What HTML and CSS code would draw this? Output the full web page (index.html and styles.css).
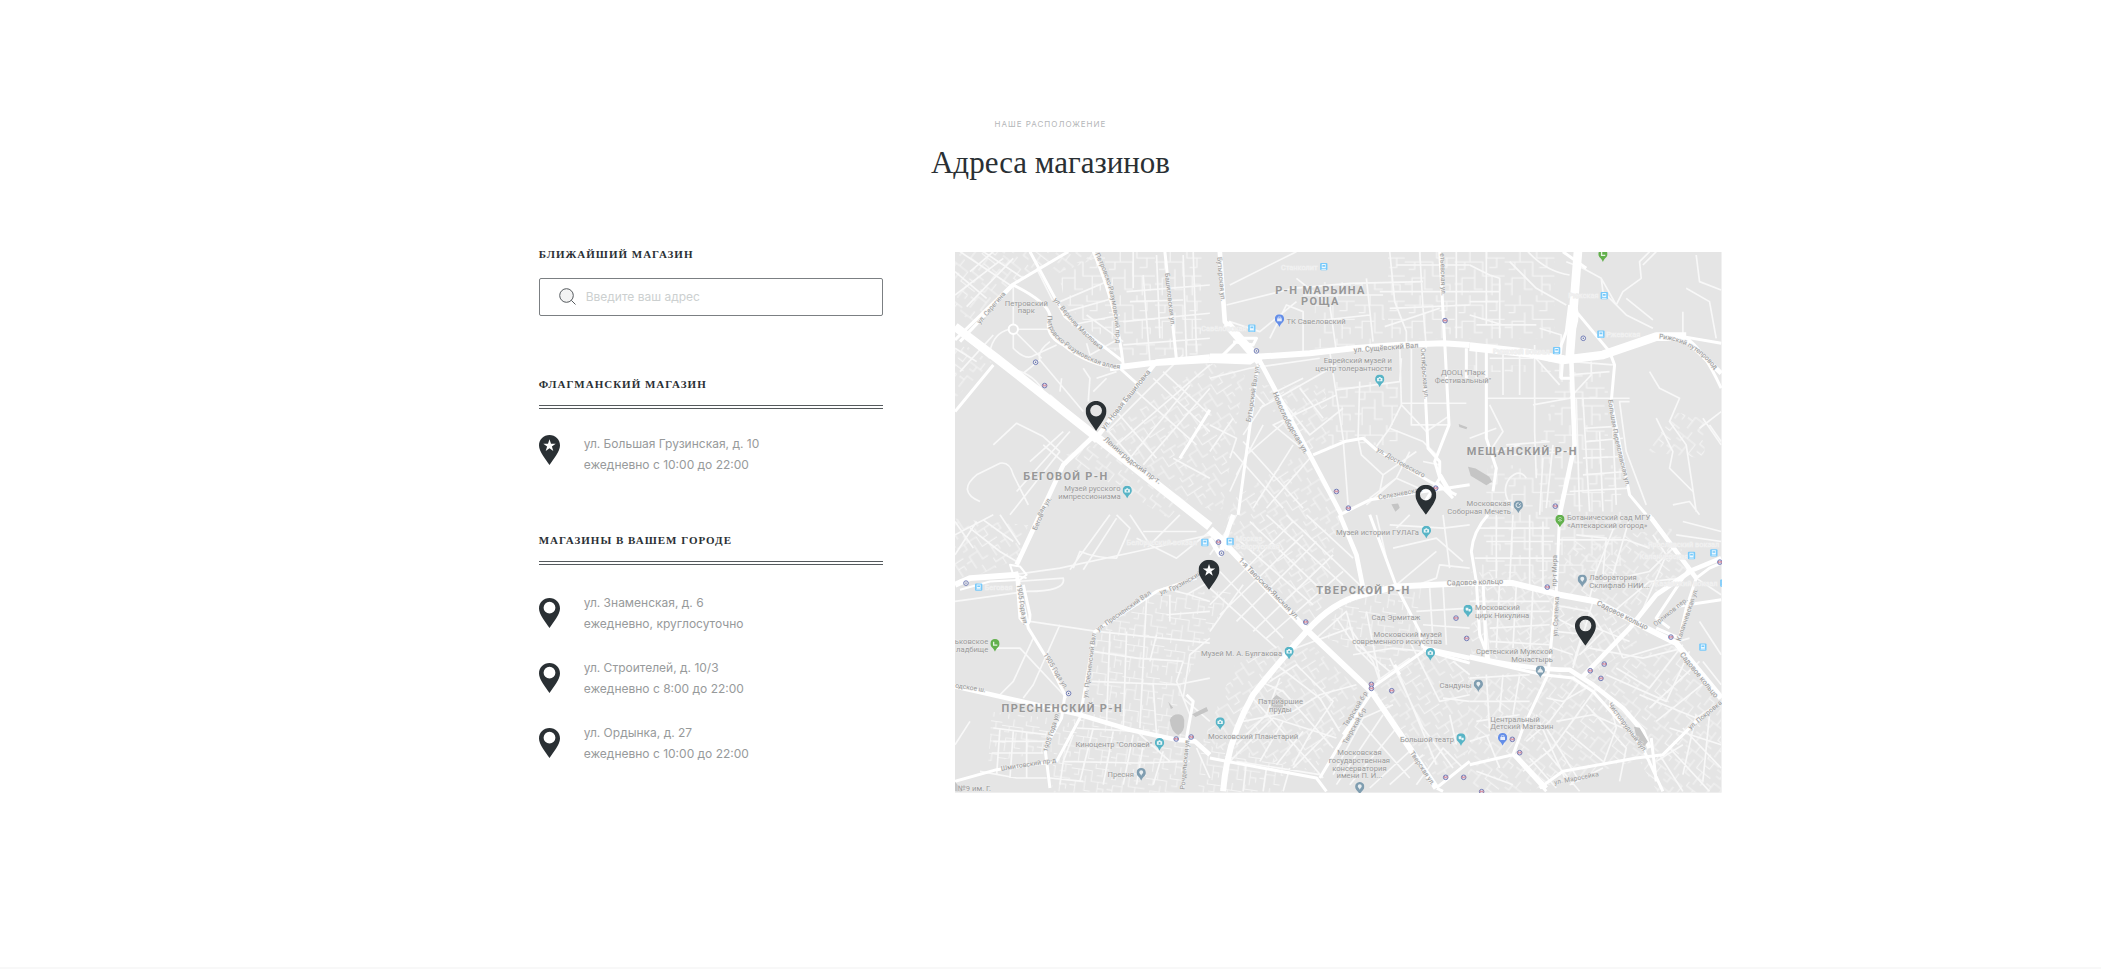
FILE: index.html
```html
<!DOCTYPE html>
<html lang="ru">
<head>
<meta charset="utf-8">
<meta name="viewport" content="width=device-width, initial-scale=1">
<title>Адреса магазинов</title>
<link rel="stylesheet" href="styles.css">
</head>
<body>
<svg class="sprite" aria-hidden="true">
  <symbol id="pin" viewBox="0 0 21 30"><path fill-rule="evenodd" d="M10.500 0C4.700 0 0 4.600 0 10.400C0 16.500 6.500 24 10.500 30C14.500 24 21 16.500 21 10.400C21 4.600 16.300 0 10.500 0ZM10.500 3.800A5.900 5.900 0 1 1 10.500 15.600A5.900 5.900 0 1 1 10.500 3.800Z"/></symbol>
  <symbol id="pin-star" viewBox="0 0 21 30"><path d="M10.500 0C4.700 0 0 4.600 0 10.400C0 16.500 6.500 24 10.500 30C14.500 24 21 16.500 21 10.400C21 4.600 16.300 0 10.500 0Z"/><path fill="#fff" d="M10.500 4.200L12 8.700H16.700L12.900 11.500L14.300 16L10.500 13.200L6.700 16L8.100 11.500L4.300 8.700H9Z"/></symbol>
</svg>
<main class="stores">
  <header class="stores-head">
    <p class="eyebrow">Наше расположение</p>
    <h1 class="title">Адреса магазинов</h1>
  </header>
  <div class="stores-body">
    <div class="panel">
      <form class="search">
        <label class="panel-title" for="address">Ближайший магазин</label>
        <div class="field">
          <svg class="field-icon" viewBox="0 0 18 18" aria-hidden="true"><circle cx="7.500" cy="7.500" r="6.800"/><path d="M12.300 12.300L16.500 16.500"/></svg>
          <input class="field-input" id="address" type="text" placeholder="Введите ваш адрес">
        </div>
      </form>
      <section class="group flagship">
        <h2 class="panel-title ruled">Флагманский магазин</h2>
        <ul class="list">
          <li class="shop"><svg class="shop-pin" aria-hidden="true"><use href="#pin-star"/></svg><p class="shop-text">ул. Большая Грузинская, д. 10<br>ежедневно с 10:00 до 22:00</p></li>
        </ul>
      </section>
      <section class="group city">
        <h2 class="panel-title ruled">Магазины в вашем городе</h2>
        <ul class="list">
          <li class="shop"><svg class="shop-pin" aria-hidden="true"><use href="#pin"/></svg><p class="shop-text">ул. Знаменская, д. 6<br>ежедневно, круглосуточно</p></li>
          <li class="shop"><svg class="shop-pin" aria-hidden="true"><use href="#pin"/></svg><p class="shop-text">ул. Строителей, д. 10/3<br>ежедневно с 8:00 до 22:00</p></li>
          <li class="shop"><svg class="shop-pin" aria-hidden="true"><use href="#pin"/></svg><p class="shop-text">ул. Ордынка, д. 27<br>ежедневно с 10:00 до 22:00</p></li>
        </ul>
      </section>
    </div>
    <svg class="map" viewBox="0 0 2301 1623" role="img" aria-label="Карта магазинов">
      <defs>
        <pattern id="blocks" width="150" height="130" patternUnits="userSpaceOnUse"><path class="tiny" d="M0 30H46V0M46 30H84V72H150M22 130V78H60V112H84M96 0V18H150M0 96H22M112 72V130M60 78V52M112 98H136V116M30 30V52H12M126 18V46H104"/></pattern>
        <pattern id="blocks-r" href="#blocks" patternTransform="rotate(38) scale(.8)"/>
        <pattern id="blocks-l" href="#blocks" patternTransform="rotate(-33) scale(.8)"/>
        <pattern id="blocks-t" href="#blocks" patternTransform="rotate(8) scale(.75)"/>
        <symbol id="drop" viewBox="0 0 28 38"><path d="M14 0C6 0 0 6 0 14C0 24 10 26 14 38C18 26 28 24 28 14C28 6 22 0 14 0Z"/></symbol>
        <g id="museum"><use href="#drop" x="-14" y="-14" width="28" height="38" fill="#57b4c6"/><path fill="#e9f6f8" d="M-8-4H-4L-2-7H2L4-4H8V6H-8Z"/><circle cy="1" r="3" fill="#57b4c6"/></g>
        <g id="drama"><use href="#drop" x="-14" y="-14" width="28" height="38" fill="#57b4c6"/><path fill="#e9f6f8" d="M-7-5H1V2Q-3 6-7 2ZM2-1H8V5Q5 8 1 5Z"/></g>
        <g id="place"><use href="#drop" x="-14" y="-14" width="28" height="38" fill="#7f9db0"/><path fill="#e8eef1" d="M0-7A6 6 0 0 1 6-1C6 3 2 4 0 9C-2 4-6 3-6-1A6 6 0 0 1 0-7Z"/></g>
        <g id="temple"><use href="#drop" x="-14" y="-14" width="28" height="38" fill="#7f9db0"/><path fill="#e8eef1" d="M-1-9H1V-5Q6-2 6 1H8V7H-8V1H-6Q-6-2-1-5Z"/></g>
        <g id="mosque"><use href="#drop" x="-14" y="-14" width="28" height="38" fill="#7f9db0"/><path fill="none" stroke="#e8eef1" stroke-width="3" d="M1-7A7 7 0 1 0 7 1M2-1L7-5"/></g>
        <g id="park"><use href="#drop" x="-14" y="-14" width="28" height="38" fill="#62b04c"/><path fill="#e6f3e2" d="M-6-6H-2V2H7V6H-6Z"/></g>
        <g id="garden"><use href="#drop" x="-14" y="-14" width="28" height="38" fill="#62b04c"/><path fill="none" stroke="#e6f3e2" stroke-width="2" d="M0 7V0M-6 4L0 0L6 4M-5-3A3 3 0 0 1 0-5A3 3 0 0 1 5-3"/></g>
        <g id="shop"><use href="#drop" x="-14" y="-14" width="28" height="38" fill="#648ee8"/><path fill="#e7edfb" d="M-7-2H7V7H-7Z"/><path fill="none" stroke="#e7edfb" stroke-width="2" d="M-4-2V-6H4V-2"/></g>
        <g id="train"><rect x="-11" y="-11" width="22" height="22" rx="3" fill="#77c9fa"/><path fill="#eef9ff" fill-rule="evenodd" d="M-6-8H6V5H-6ZM-4-5V0H4V-5ZM-7 7H7V9H-7Z"/></g>
        <g id="metro"><circle r="7" fill="#dcd9ea" stroke="#7480b8" stroke-width="3"/><path fill="none" stroke="#d46a76" stroke-width="2" d="M-4 3V-3L0 1L4-3V3"/></g>
        <g id="ring"><circle r="7" fill="#eee" stroke="#7480b8" stroke-width="3"/><circle r="2" fill="#5261a3"/></g>
      </defs>
      <rect width="2301" height="1623" fill="#e5e5e5"/>
      <!-- small blocks -->
      <g>
        <path fill="url(#blocks-r)" d="M0 0H330L180 100L60 210L0 180ZM0 260L110 330L0 440ZM270 80L420 20V0H330ZM300 620L440 570L560 690L700 740L640 800L480 700Z"/>
        <path fill="url(#blocks)" d="M310 60L430 0H740V310H520L460 290L330 150ZM1080 90H1290V290H1080ZM1300 0H1800V260H1300ZM1560 0H1630V280H1560Z"/>
        <path fill="url(#blocks-l)" d="M455 540L760 330L870 370L800 790L690 740ZM840 740L1040 600L1160 780L1090 1130L800 850ZM900 400L1110 400L1130 590L1040 600ZM0 800L220 820L190 920L0 1000Z"/>
        <path fill="url(#blocks)" d="M1120 390H1330V580H1120ZM1540 360H1960V640H1740L1820 340H1540ZM1600 640H2000V980H1580Z"/>
        <path fill="url(#blocks-t)" d="M420 1130L600 1020H830L690 1290L660 1440L390 1370ZM110 1380L290 1400V1500L100 1530ZM300 1440L390 1380L690 1450V1623H290ZM740 1460L990 1530L980 1623H730ZM1200 1000H1400L1380 1180L1300 1250L1100 1150Z"/>
        <path fill="url(#blocks-l)" d="M840 1240L1040 1150L1220 1320L1080 1560L740 1480ZM1260 1320L1390 1210L1540 1220V1500L1450 1590ZM1550 960H1800V1220H1550ZM1810 1060L1960 1070L2080 1150L1900 1280L1820 1240Z"/>
        <path fill="url(#blocks-r)" d="M1740 1260L1900 1270L2050 1420L2110 1510L1700 1623H1540V1270ZM1900 1260L2160 1180L2300 1340V1623H2110ZM1830 870L2150 830L2210 950L2010 1090L1830 1030ZM2080 600L2160 480L2250 500V620Z"/>
      </g>
      <!-- north-west -->
      <g transform="translate(-15 -21)">
        <path class="street" d="M30 20L180 120M100 20L220 100M15 80L110 160M15 150L160 40M50 185L190 40M130 20L60 80M190 120V240M205 253H300M178 253Q130 265 120 320M200 265L275 340M190 265V310Q230 350 255 330L320 300M300 290Q260 320 270 345L400 500M270 345L220 385M15 310L80 350M30 380L130 270M60 290L120 340M330 170L470 110M350 200L490 160M365 240L510 210M410 295L420 330L510 280M310 170L260 70M410 210L520 290M520 230L780 205M530 140L780 120M550 20V130M580 90L600 350M620 30L630 280M700 30L710 340M730 20L740 320M520 300L780 280M540 170L700 165M400 370L420 400L415 470M440 400L500 380M430 440L470 400M335 400L330 440M300 450L380 520M170 370Q250 380 280 440L360 510M90 770Q20 740 80 690L150 655Q180 650 190 690L235 780M130 600L200 535L280 575L330 620M200 740L360 560M240 650L340 560M280 600L350 660M180 810L330 620M470 560L700 330M500 600L780 360M540 640L720 420M580 660L780 430M460 540L590 690M500 500L620 640M560 440L740 600M610 400L780 560M640 380L780 510M670 640L780 700"/>
        <path class="road" d="M190 120L30 290M355 20L185 120L15 285M240 20L345 215L520 350M190 120Q290 170 300 210Q280 270 340 300Q410 360 510 370L560 415M430 20Q500 180 520 360M645 20L680 345M15 500L130 360M780 495L690 640"/>
        <path class="main" d="M430 590L620 350L780 335M430 575L340 660L270 810"/>
        <path class="avenue" d="M480 370L600 355L780 345"/>
        <path class="highway" d="M15 245L140 340L438 575L780 845"/>
        <circle class="round" cx="190" cy="253" r="14"/>
      </g>
      <!-- north -->
      <g transform="translate(765 -21)">
        <path class="street" d="M60 120L260 20M50 180L250 130L420 115L640 110M260 100L360 180L380 320M60 230L150 260L260 170M180 280L230 180L280 200V320M300 230L480 210M470 100L490 290M540 20L555 170L590 260V310M630 20L640 190L650 310M560 60H780M510 140H780M540 190L780 180M525 245L690 190M740 20V280M700 60H780M280 150H520M360 320L400 580L415 780M380 435L570 410L575 340M570 300L575 480L540 550L500 605M575 475H770M605 310V540H715M450 410L445 580L455 630L520 690L510 740M0 400L120 370L330 340M150 490L380 360M200 440L280 400M165 480L120 430M100 570L160 480M0 540L80 580L60 640M0 620L70 520M100 590L280 790M70 620L220 790M60 740L110 630L260 500M300 630L190 540L380 450M250 600L130 790M300 640L170 790M160 540L80 690M220 470L300 570L400 490M270 430L340 520M540 550L640 590L680 630M575 480L650 560L715 515M600 620L560 700L470 780M520 690L620 620M480 760L560 700L650 740M640 650L690 660"/>
        <path class="road" d="M310 630L405 590L460 580L500 615L660 710L740 750M85 810L145 360M690 20L705 290L718 540L675 650L690 700M640 310L655 610L690 650L690 700L640 780M390 810L480 765L780 720M70 290L130 300L140 280H90L40 330M770 310V400M680 710L730 760"/>
        <path class="main" d="M30 20L45 230L140 340M140 330L300 630L395 810M690 690L725 750"/>
        <path class="avenue" d="M0 335H150L300 325L430 310L560 300L700 295L780 300M0 345L120 350L150 330"/>
        <path class="highway" d="M50 235L150 350"/>
      </g>
      <!-- north-east -->
      <g transform="translate(1545 -21)">
        <path class="street" d="M0 60L60 90L90 100V280M0 140H90M0 170H85M0 210L100 240M20 240H200M50 20V240M120 50L200 130L290 180M175 20Q230 80 300 90M290 50L340 70L395 100L440 180M395 100L400 140L470 210L550 250M470 160L550 225M540 20L510 50L515 100L460 140L440 180M560 20L520 60M680 30L690 110L755 135M650 130L720 170L740 280M640 200V290M210 250L275 270L270 400M310 350L430 360M365 350V390L300 460L190 480M195 300V560L200 700M50 460H480M60 480L100 560L60 620M190 330L270 420M300 390L420 380M320 460L330 800M340 460L360 800M345 550L430 545M350 590L460 580M340 640L450 635M340 690L470 680M390 560L400 800M430 550L440 780M300 740L480 730M480 470L450 470L470 620L530 780M540 380L570 430L630 460L600 530L650 600L680 800M560 520L610 620L600 670L670 740M690 550L755 500M700 520L755 600M720 540L755 590M610 780L660 770L690 810M110 600L240 590M130 630L300 620M220 640L210 810M250 600L230 790M170 700Q150 670 120 700Q90 740 130 790M0 580L80 550M80 620L150 600M20 300V400M60 340H190M100 320V450M150 320V450M220 320L240 350"/>
        <path class="road" d="M320 200L420 320L435 360L425 470L480 750L530 810M50 320V580L80 670L70 740M280 330L275 400H310M640 275L755 295M280 20L350 70M300 180L290 260L275 300L270 340M320 190Q330 230 300 280M650 280Q700 310 755 430"/>
        <path class="main" d="M305 340L315 600L270 810M755 385L650 285"/>
        <path class="highway" d="M325 20L300 340M0 305L180 325L280 345L400 330L560 275L650 275"/>
      </g>
      <!-- south-west -->
      <g transform="translate(-15 789)">
        <path class="street" d="M15 60L130 0M15 120L80 20M60 40L150 110L200 140M100 15L190 80M150 0L210 90M15 20L70 100M360 165L480 0M400 165L500 10M370 160L390 110Q440 130 500 130L540 40L500 0M540 0L600 90L690 0M560 70L680 130L780 50M580 50H740M200 200L340 190Q350 230 230 230L15 260M120 190L330 160L560 110L780 60M240 320L440 350L780 385M330 330L250 510L220 550M250 370L190 500L150 540M140 400L210 400L350 550M430 410L560 430L700 440M425 500L680 510L780 490M590 250L570 640M660 240V320M710 240L780 200M650 300L780 290M480 350L470 620M530 350L520 640M620 360L600 440M700 440L680 500L720 600M780 370L720 420L700 550L780 620M610 510L620 660M130 640L290 660M130 680H290M125 715H280M150 640L140 780M190 650L180 790M230 650V790M90 770L200 790H290M15 690L60 620M380 640L560 650L660 740M370 660L340 740L330 810M430 640L390 800M490 650L460 810M550 660L520 810M340 740L560 745L720 740M580 690L560 810M640 710L610 810M300 790L400 800M720 670L700 820M740 700L780 790M780 260L720 240L640 220"/>
        <path class="road" d="M200 170L235 340L290 430L345 540L335 610L285 700L300 820M390 610L435 350L620 230L740 190M15 800L140 765L320 740L390 610M200 180L210 310Q240 350 240 300L220 210M710 670L730 560L710 540"/>
        <path class="main" d="M15 515L390 600L540 645L680 675L735 680L780 720M270 0L200 150"/>
        <path class="avenue" d="M15 210L60 190L200 180"/>
        <path class="thin" d="M30 225L120 200L210 195L230 180L210 155L180 150L190 180L230 190"/>
      </g>
      <!-- south -->
      <g transform="translate(765 789)">
        <path class="street" d="M0 270L250 20M30 300L280 60M80 320L320 80M130 350L370 120M170 370L400 170M30 170L220 370M0 220L200 400M80 70L310 270M120 20L350 240M170 0L400 210M230 0L460 220M290 0L430 130M0 350L100 210M0 120L70 20L80 0M500 0L530 130M540 30L700 40L780 30M550 100L680 70L760 140M570 230L680 190L690 150L780 160M600 0L560 40M700 0L720 160M560 210L680 110M620 290L780 280M640 330L780 340M700 210L710 390M660 220L670 380M230 410L420 340L490 440L510 500M380 310L420 370L540 470M320 370L410 290L440 400L510 470M430 420L550 400L640 410M540 430L640 640L730 760M600 380L690 560L780 540M560 460L680 750M500 500L600 430M470 290L510 490M120 540L280 720L340 790M150 500L220 530L370 700M200 450L330 550L390 650M180 500L260 450L370 560L300 660L250 750M100 620L250 590L330 540L440 510M80 690L170 600L210 490M50 750L190 610L380 670M80 740L330 780M150 740L220 620M200 750L280 650M250 760L370 640M110 740L100 830M170 760L160 830M240 760L220 830M370 780L460 610L550 570M380 810L520 600M420 810L560 640M480 820L610 700M540 810L640 720M620 810L700 700L760 760M450 620L600 790M510 570L660 790M700 550L780 560M720 600L740 690M730 440L780 480"/>
        <path class="road" d="M480 0L560 215L630 350L640 400M485 520L640 410M555 450L570 480M0 730L50 740L320 790L350 830M330 790L485 530M680 820L780 740M680 820L700 830M400 660L485 535M640 405L780 445"/>
        <path class="main" d="M390 0L440 120L460 220M640 400L780 430M0 70L30 120L70 0"/>
        <path class="avenue" d="M40 830Q50 680 130 540Q200 450 290 350Q370 260 460 240L560 215L780 205M30 70L290 345L485 530L600 700L680 820"/>
        <path class="highway" d="M0 45L60 100"/>
      </g>
      <!-- south-east -->
      <g transform="translate(1545 789)">
        <path class="street" d="M30 40H240M50 80H250M15 130H250M80 0V190M130 0L120 200M180 0V210M220 20V220M40 220L60 440M0 260H240M90 200L80 400M140 210L130 400M190 220L180 430M60 290H240M60 340L240 330M60 380L240 390M250 270L360 290L400 350L330 420M260 310L340 350L310 450M255 350L360 360M250 400L310 420M370 260L310 460M320 60L410 70L400 180M270 75H470L540 100M440 20L380 170L360 250M480 10L430 180M550 60L590 120L500 330M400 200L540 170L620 90M420 300L540 200L640 190M380 340L480 380M420 340L460 430M360 400L520 430L640 400M460 430L660 370M440 460L540 520L640 390M410 480L590 560L660 410M510 540L680 610L755 560M540 580L690 440M560 620L710 500M600 640L755 690M640 640L755 760M680 600L640 780M720 600L700 800M570 720L640 830M600 700L720 830M560 740L640 690M330 500L240 620L170 680M380 520L250 700L160 770M420 560L440 640L400 750M350 570L470 700L450 800M260 620L370 600L460 640M230 640L330 800M200 600L290 800M290 650L400 740M350 520L280 560L230 550M0 490L180 480M0 560H180M20 620L150 600M50 660L90 760M0 680L60 660M50 480L60 650M100 480L90 590M150 480L130 600M20 770L130 810M180 730L260 820M220 700L330 830M300 810L400 760M680 190L755 240M620 60L755 80M640 20L755 50M690 320L755 420M700 440L755 510"/>
        <path class="road" d="M270 0L260 230L235 480L160 640L130 720L0 750M20 200L30 360L60 440M40 200L50 430M55 0Q10 50 5 110L20 200M600 340L560 310L660 160M680 190L650 280L630 370L560 340M680 190L540 0M755 565L680 620L580 720L500 730L280 770L210 820M420 570L520 700L580 830M130 720L230 830M0 430L220 480L310 490L370 530L450 620L520 690M545 670L560 800M680 190L720 160L755 145M620 275L755 255"/>
        <path class="main" d="M0 425Q180 465 300 465L370 510L460 580L520 650L540 700M340 485L480 340L560 240L670 165L755 130M135 720L230 820M545 10L680 190"/>
        <path class="avenue" d="M0 205L130 205L270 240L380 260L530 340L620 385L755 550"/>
      </g>
      <!-- ponds -->
      <g fill="#c5c5c5">
        <path d="M1540 645L1563 650L1604 675L1612 690L1595 700L1548 672Z"/>
        <path d="M645 1405Q650 1388 672 1388Q690 1390 688 1415Q690 1440 670 1450Q648 1440 645 1405ZM712 1388L755 1366L760 1378L722 1396ZM640 1350L655 1368L648 1372Z"/>
        <path d="M945 1349L965 1330L988 1345L983 1370L952 1372ZM2038 1425L2055 1428L2080 1470L2065 1488L2052 1478ZM1310 757L1330 755L1335 768L1322 780Z"/>
        <path d="M1512 516L1538 526L1535 532L1514 525ZM0 1590L8 1600L30 1612L20 1620L0 1618Z"/>
      </g>
      <!-- station names -->
      <g class="station">
        <g transform="translate(765 -21)"><text x="214" y="74">Станколит</text></g>
        <g transform="translate(1545 -21)"><text x="296" y="160">Рижская</text><text x="410" y="277">Ржевская</text><text x="70" y="326">Рижский вокзал</text></g>
        <g transform="translate(-15 789)"><text x="104" y="226">Беговая</text><text x="530" y="91">Белорусский вокзал</text></g>
        <g transform="translate(765 789)"><text x="78" y="79">Москва</text><text x="78" y="102">Белорусская</text></g>
        <g transform="translate(1545 789)"><text x="535" y="97">Ярославский вокзал</text><text x="510" y="132">Каланчёвская</text><text x="555" y="214">Казанский вокзал</text></g>
        <text class="end" x="875" y="236">Савёловская</text>
      </g>
      <!-- street names -->
      <g class="name">
        <g transform="translate(-15 -21)">
          <path id="s1" d="M435 28Q490 130 497 262L500 340"/><path id="s2" d="M310 165L375 245L440 305L520 360"/><path id="s3" d="M293 212Q290 260 330 290Q400 350 490 370L600 380"/><path id="s4" d="M90 238L200 110"/><path id="s5" d="M645 85L672 320"/><path id="s6" d="M464 555L640 335"/><path id="s7" d="M460 585L540 655L720 785"/><path id="s7b" d="M270 815L345 705"/>
          <text><textPath href="#s1">Петровско-Разумовский пр-д</textPath></text><text><textPath href="#s2">ул. Верхняя Масловка</textPath></text><text><textPath href="#s3">Петровско-Разумовская аллея</textPath></text><text><textPath href="#s4">ул. Серегина</textPath></text><text><textPath href="#s5">Башиловская ул.</textPath></text><text class="big"><textPath href="#s6">ул. Новая Башиловка</textPath></text><text class="big"><textPath href="#s7">Ленинградский пр-т.</textPath></text><text><textPath href="#s7b">вая ул.</textPath></text>
        </g>
        <g transform="translate(765 -21)">
          <path id="s8" d="M22 37L42 277"/><path id="s9" d="M692 25L698 260"/><path id="s10" d="M433 323L740 299"/><path id="s11" d="M633 310L650 550"/><path id="s12" d="M122 532L160 290"/><path id="s13" d="M188 445L220 520L360 760"/><path id="s14" d="M500 618L570 660L750 755"/><path id="s15" d="M507 764L740 722"/>
          <text><textPath href="#s8">Бутырская ул.</textPath></text><text><textPath href="#s9">етьевская ул.</textPath></text><text class="big"><textPath href="#s10">ул. Сущёвский Вал</textPath></text><text><textPath href="#s11">Октябрьская ул.</textPath></text><text><textPath href="#s12">Бутырский Вал ул.</textPath></text><text class="big"><textPath href="#s13">Новослободская ул.</textPath></text><text><textPath href="#s14">ул. Достоевского</textPath></text><text><textPath href="#s15">Селезневская</textPath></text>
        </g>
        <g transform="translate(1545 -21)">
          <path id="s16" d="M568 281Q670 288 735 375L790 450"/><path id="s17" d="M415 465L432 570L485 790"/>
          <text><textPath href="#s16">Рижский путепровод</textPath></text><text><textPath href="#s17">Большая Переяславская ул.</textPath></text>
        </g>
        <g transform="translate(-15 789)">
          <path id="s18" d="M200 210L228 378"/><path id="s19" d="M280 420L385 590"/><path id="s20" d="M293 713L350 523"/><path id="s21" d="M413 550L448 284"/><path id="s22" d="M445 350L680 183"/><path id="s23" d="M632 240Q700 220 790 155"/><path id="s24" d="M154 768L410 728"/><path id="s25" d="M15 518L160 541"/><path id="s26" d="M704 825L726 600"/><path id="s27" d="M260 48L305-57"/>
          <text><textPath href="#s18">1905 Года ул.</textPath></text><text><textPath href="#s19">1905 Года ул.</textPath></text><text><textPath href="#s20">1905 Года ул.</textPath></text><text><textPath href="#s21">ул. Пресненский Вал</textPath></text><text><textPath href="#s22">ул. Пресненский Вал</textPath></text><text><textPath href="#s23">ул. Грузинский</textPath></text><text><textPath href="#s24">Шмитовский пр-д</textPath></text><text><textPath href="#s25">одское ш.</textPath></text><text><textPath href="#s26">Рочдельская ул.</textPath></text><text><textPath href="#s27">Бегов</textPath></text>
        </g>
        <g transform="translate(765 789)">
          <path id="s28" d="M85 138L310 365"/><path id="s29" d="M410 638L500 494"/><path id="s30" d="M410 690L510 513"/><path id="s31" d="M600 715L700 865"/><path id="s32" d="M712 212L960 204"/>
          <text class="big"><textPath href="#s28">1-я Тверская-Ямская ул.</textPath></text><text><textPath href="#s29">Тверской б-р</textPath></text><text><textPath href="#s30">Тверской б-р</textPath></text><text><textPath href="#s31">Тверская ул.</textPath></text><text class="big"><textPath href="#s32">Садовое кольцо</textPath></text>
        </g>
        <g transform="translate(1545 789)">
          <path id="s33" d="M260 215L263 60"/><path id="s34" d="M263 365L270 200"/><path id="s35" d="M380 270L630 395"/><path id="s36" d="M630 420L790 617"/><path id="s37" d="M558 335L700 222"/><path id="s38" d="M633 380L704 170"/><path id="s39" d="M663 645L800 532"/><path id="s40" d="M415 570L560 763"/><path id="s41" d="M255 810L450 772"/>
          <text><textPath href="#s33">пр-т Мира</textPath></text><text><textPath href="#s34">ул. Сретенка</textPath></text><text class="big"><textPath href="#s35">Садовое кольцо</textPath></text><text class="big"><textPath href="#s36">Садовое кольцо</textPath></text><text><textPath href="#s37">Орликов пер.</textPath></text><text><textPath href="#s38">Каланчевская ул.</textPath></text><text><textPath href="#s39">ул. Покровка</textPath></text><text><textPath href="#s40">Чистопрудный бул.</textPath></text><text><textPath href="#s41">ул. Маросейка</textPath></text>
        </g>
      </g>
      <!-- places -->
      <g class="poi">
        <g transform="translate(-15 -21)"><text class="mid" x="229" y="182">Петровский<tspan x="229" dy="23">парк</tspan></text><text class="end" x="512" y="739">Музей русского<tspan x="512" dy="23">импрессионизма</tspan></text><use href="#museum" x="532" y="737"/><use href="#ring" x="257" y="352"/><use href="#metro" x="284" y="422"/></g>
        <g transform="translate(765 -21)"><text x="230" y="236">ТК Савеловский</text><text class="end" x="547" y="354">Еврейский музей и<tspan x="547" dy="23">центр толерантности</tspan></text><text class="mid" x="760" y="391">ДООЦ "Парк<tspan x="760" dy="23">Фестивальный"</tspan></text><use href="#shop" x="209" y="222"/><use href="#museum" x="510" y="403"/><use href="#train" x="342" y="65"/><use href="#train" x="126" y="250"/><use href="#ring" x="140" y="318"/><use href="#metro" x="706" y="227"/><use href="#metro" x="678" y="730"/><use href="#metro" x="380" y="740"/><use href="#metro" x="416" y="790"/></g>
        <g transform="translate(1545 -21)"><use href="#park" x="400" y="27"/><use href="#train" x="404" y="152"/><use href="#train" x="394" y="268"/><use href="#train" x="261" y="317"/><use href="#ring" x="341" y="280"/><use href="#metro" x="257" y="784"/><text class="end" x="124" y="784">Московская<tspan x="124" dy="23">Соборная Мечеть</tspan></text><use href="#mosque" x="146" y="781"/></g>
        <g transform="translate(-15 789)"><use href="#train" x="86" y="217"/><use href="#train" x="765" y="83"/><use href="#ring" x="48" y="205"/><use href="#ring" x="356" y="536"/><use href="#metro" x="679" y="673"/><use href="#metro" x="724" y="667"/><text class="end" x="115" y="389">ьковское<tspan x="115" dy="24">ладбище</tspan></text><use href="#park" x="135" y="387"/><text class="end" x="607" y="698">Киноцентр "Соловей"</text><use href="#museum" x="629" y="684"/><text class="end" x="552" y="787">Пресня</text><use href="#place" x="574" y="774"/><text x="24" y="828">№9 им. Г.</text></g>
        <g transform="translate(765 789)"><text class="end" x="628" y="60">Музей истории ГУЛАГа</text><use href="#museum" x="650" y="47"/><use href="#train" x="61" y="80"/><use href="#metro" x="26" y="82"/><use href="#ring" x="35" y="115"/><use href="#metro" x="288" y="322"/><text class="mid" x="559" y="316">Сад Эрмитаж</text><text class="end" x="697" y="366">Московский музей<tspan x="697" dy="23">современного искусства</tspan></text><use href="#museum" x="662" y="414"/><text class="end" x="217" y="424">Музей М. А. Булгакова</text><use href="#museum" x="238" y="410"/><text class="mid" x="212" y="568">Патриаршие<tspan x="212" dy="23">пруды</tspan></text><use href="#museum" x="31" y="622"/><text class="mid" x="130" y="673">Московский Планетарий</text><use href="#metro" x="485" y="509"/><use href="#metro" x="485" y="521"/><use href="#metro" x="546" y="528"/><text class="end" x="733" y="683">Большой театр</text><use href="#drama" x="754" y="670"/><text class="mid" x="449" y="722">Московская<tspan x="449" dy="23">государственная</tspan><tspan x="449" dy="23">консерватория</tspan><tspan x="449" dy="23">имени П. И...</tspan></text><use href="#place" x="450" y="816"/><use href="#metro" x="708" y="788"/><use href="#metro" x="762" y="788"/><use href="#metro" x="739" y="310"/><use href="#metro" x="771" y="371"/></g>
        <g transform="translate(1545 789)"><use href="#garden" x="271" y="14"/><text x="292" y="16">Ботанический сад МГУ<tspan x="292" dy="23">«Аптекарский огород»</tspan></text><use href="#train" x="666" y="122"/><use href="#train" x="733" y="114"/><use href="#train" x="763" y="205"/><use href="#train" x="700" y="397"/><use href="#metro" x="751" y="142"/><use href="#place" x="338" y="193"/><text x="359" y="196">Лаборатория<tspan x="359" dy="23">Склифлаб НИИ...</tspan></text><use href="#metro" x="233" y="217"/><use href="#drama" x="-5" y="284"/><text x="16" y="286">Московский<tspan x="16" dy="23">цирк Никулина</tspan></text><text class="end" x="250" y="418">Сретенский Мужской<tspan x="250" dy="23">Монастырь</tspan></text><use href="#temple" x="212" y="466"/><use href="#place" x="26" y="508"/><text class="end" x="6" y="520">Сандуны</text><use href="#metro" x="404" y="448"/><use href="#metro" x="362" y="468"/><use href="#metro" x="394" y="491"/><use href="#metro" x="604" y="367"/><text x="62" y="621">Центральный<tspan x="62" dy="23">Детский Магазин</tspan></text><use href="#shop" x="99" y="669"/><use href="#metro" x="128" y="674"/><use href="#metro" x="150" y="714"/><use href="#metro" x="36" y="831"/></g>
      </g>
      <!-- districts -->
      <g class="district">
        <text x="333" y="685">БЕГОВОЙ Р-Н</text>
        <text x="1097" y="126">Р-Н МАРЬИНА<tspan x="1097" dy="33">РОЩА</tspan></text>
        <text x="1703" y="609">МЕЩАНСКИЙ Р-Н</text>
        <text x="1226" y="1028">ТВЕРСКОЙ Р-Н</text>
        <text x="322" y="1382">ПРЕСНЕНСКИЙ Р-Н</text>
      </g>
      <!-- stores -->
      <g class="marker">
        <use href="#pin" x="392" y="447" width="63" height="90"/>
        <use href="#pin" x="1382" y="699" width="63" height="90"/>
        <use href="#pin" x="1861" y="1092" width="63" height="90"/>
        <use href="#pin-star" x="731" y="924" width="63" height="90"/>
      </g>
    </svg>
  </div>
</main>
</body>
</html>
```
FILE: styles.css
```css
* {
  box-sizing: border-box;
}

body {
  margin: 0;
  min-height: 100vh;
  background: #fff;
  border-bottom: 2px solid #f8f8f8;
  color: #2a3034;
  font-family: Inter, "Open Sans", sans-serif;
}

.sprite {
  position: absolute;
  width: 0;
  height: 0;
}

.stores {
  padding: 118px 0 80px;
}

.stores-head {
  text-align: center;
}

.eyebrow {
  margin: 0;
  color: #b4b6b8;
  font-size: 8px;
  line-height: 12px;
  letter-spacing: 1px;
  text-transform: uppercase;
}

.title {
  margin: 14px 0 0;
  font-family: "Liberation Serif", serif;
  font-size: 31px;
  font-weight: 400;
  line-height: 38px;
}

.stores-body {
  display: grid;
  grid-template-columns: 345fr 767fr;
  gap: 72px;
  align-items: start;
  margin-top: 70px;
  padding: 0 18.04% 0 25.64%;
}

.panel-title {
  display: block;
  margin: 0;
  font-family: "Liberation Serif", serif;
  font-size: 11px;
  font-weight: 700;
  line-height: 16px;
  letter-spacing: 1px;
  text-transform: uppercase;
  white-space: nowrap;
}

.search {
  margin-top: -6px;
}

.field {
  display: flex;
  align-items: center;
  gap: 9px;
  height: 38px;
  margin-top: 16px;
  padding: 0 19px;
  border: 1px solid #7b7f82;
  border-radius: 2px;
}

.field-icon {
  flex: none;
  width: 18px;
  height: 18px;
  fill: #f3f3f3;
  stroke: #555a5e;
}

.field-input {
  flex: 1;
  min-width: 0;
  padding: 0;
  border: 0;
  outline: 0;
  background: none;
  color: #2a3034;
  font: 12px/18px Inter, "Open Sans", sans-serif;
}

.field-input::placeholder {
  color: #ccd0d0;
  opacity: 1;
}

.group {
  margin-top: 60px;
}

.group.city {
  margin-top: 57px;
}

.ruled {
  padding-bottom: 13px;
  border-bottom: 4px double #555a5d;
}

.list {
  display: grid;
  gap: 23px;
  margin: 24px 0 0;
  padding: 0;
  list-style: none;
}

.city .list {
  margin-top: 27px;
}

.shop {
  display: flex;
  align-items: flex-start;
  gap: 24px;
}

.shop-pin {
  flex: none;
  width: 21px;
  height: 30px;
  margin-top: 6px;
  fill: #2a3034;
}

.flagship .shop-pin {
  margin-top: 2px;
}

.shop-text {
  margin: 0;
  color: #979a9b;
  font-size: 12px;
  line-height: 21px;
}

.map {
  display: block;
  width: 100%;
  height: auto;
  overflow: hidden;
}

.map path.tiny,
.map .street,
.map .road,
.map .main,
.map .avenue,
.map .highway,
.map .thin,
.map .round {
  fill: none;
  stroke: #fff;
  stroke-linejoin: round;
}

.map path.tiny {
  stroke: #f4f4f4;
  stroke-width: 4px;
}

.map .street {
  stroke: #f8f8f8;
  stroke-width: 5px;
}

.map .road {
  stroke-width: 9px;
}

.map .thin,
.map .round {
  stroke-width: 6px;
}

.map .main {
  stroke-width: 14px;
}

.map .avenue {
  stroke-width: 18px;
}

.map .highway {
  stroke-width: 26px;
}

.name path {
  fill: none;
  stroke: none;
}

.name,
.poi,
.station,
.district {
  font-family: Roboto, sans-serif;
  font-size: 22px;
  fill: #999;
  paint-order: stroke;
  stroke: #ececec;
  stroke-width: 3px;
}

.poi use {
  stroke: none;
  paint-order: normal;
}

.name {
  font-size: 20px;
}

.name .big {
  font-size: 22px;
}

.poi {
  font-size: 23px;
}

.station {
  fill: #f2f2f2;
}

.mid {
  text-anchor: middle;
}

.end {
  text-anchor: end;
}

.district {
  fill: #979797;
  font-size: 33px;
  font-weight: 700;
  letter-spacing: 4px;
  text-anchor: middle;
}

.marker {
  fill: #2a3034;
}
```
